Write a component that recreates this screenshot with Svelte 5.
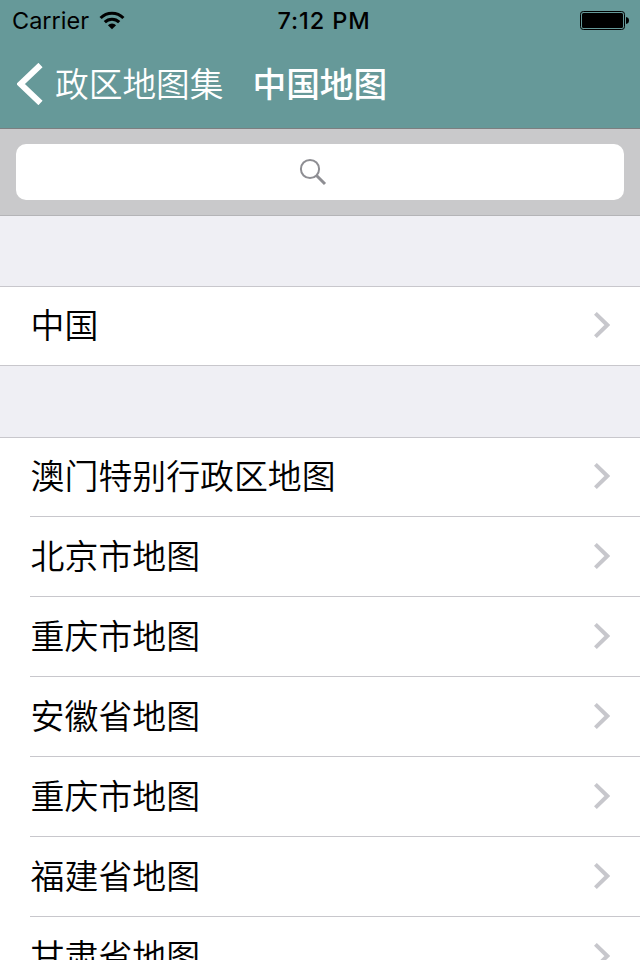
<script>
  const groups = [
    ['中国'],
    [
      '澳门特别行政区地图',
      '北京市地图',
      '重庆市地图',
      '安徽省地图',
      '重庆市地图',
      '福建省地图',
      '甘肃省地图',
    ],
  ];
</script>

<main class="screen">
  <header class="header">
    <div class="status">
      <div class="side">
        <span class="carrier">Carrier</span>
        <svg class="wifi" width="26" height="20" viewBox="0 0 26 20">
          <g fill="none" stroke="#000" stroke-width="3.1">
            <path d="M1.6 8A16.1 16.1 0 0 1 24.4 8" />
            <path d="M5.8 12.2A10.2 10.2 0 0 1 20.2 12.2" />
          </g>
          <path d="M8.9 15.2A5.8 5.8 0 0 1 17.1 15.2L13 19.3Z" />
        </svg>
      </div>
      <span class="time">7:12 PM</span>
      <div class="side right">
        <svg width="49" height="19" viewBox="0 0 49 19">
          <rect x=".5" y=".5" width="44" height="18" rx="2.8" fill="none" stroke="#000" />
          <rect x="2" y="2" width="41" height="15" rx="1.5" />
          <path d="M46 6C48 6.3 49 7.5 49 9.5S48 12.7 46 13Z" />
        </svg>
      </div>
    </div>
    <nav class="nav">
      <button class="back">
        <svg width="26" height="42" viewBox="0 0 26 42">
          <path d="M23.5 2L3.5 21L23.5 40" fill="none" stroke="#fff" stroke-width="6" />
        </svg>
        <span>政区地图集</span>
      </button>
      <h1>中国地图</h1>
    </nav>
  </header>

  <div class="search">
    <div class="field">
      <svg width="28" height="28" viewBox="0 0 28 28" fill="none" stroke="#8e8e93">
        <circle cx="11" cy="11" r="9.1" stroke-width="2" />
        <path d="M17.5 17.5L26 26" stroke-width="3" />
      </svg>
    </div>
  </div>

  {#each groups as rows}
    <ul class="group">
      {#each rows as label}
        <li class="row">
          <div class="content">
            <span class="label">{label}</span>
            <svg width="16" height="26" viewBox="0 0 16 26">
              <path d="M1.4 1.4L13.3 13L1.4 24.6" fill="none" stroke="#c7c7cc" stroke-width="4" />
            </svg>
          </div>
        </li>
      {/each}
    </ul>
  {/each}
</main>

<style>
  .screen {
    width: 640px;
    height: 960px;
    overflow: hidden;
    background: #efeff4;
    color: #000;
    font-family: 'Noto Sans CJK SC', sans-serif;
  }
  .header {
    height: 128px;
    background: #669999;
    border-bottom: 1px solid #7b7f81;
  }
  .status {
    display: flex;
    align-items: center;
    height: 40px;
    padding: 0 11px 0 12px;
    font: 24px/40px Inter, sans-serif;
  }
  .side {
    flex: 1;
    display: flex;
    align-items: center;
  }
  .right {
    justify-content: flex-end;
  }
  .carrier {
    width: 78px;
    margin-right: 9px;
    padding-top: 2px;
    white-space: nowrap;
    font-size: 23.5px;
    line-height: 38px;
  }
  .time {
    padding: 2px 0 0 7px;
    font-weight: 550;
    font-size: 23.5px;
    line-height: 38px;
    letter-spacing: 0.9px;
  }
  .nav {
    display: flex;
    align-items: center;
    height: 88px;
    padding-left: 17px;
    color: #fff;
  }
  .back {
    display: flex;
    align-items: center;
    gap: 12px;
    padding: 0;
    border: 0;
    background: none;
    color: inherit;
    font: 350 33.7px/50px 'Noto Sans CJK SC', sans-serif;
  }
  .back span {
    padding-bottom: 2px;
  }
  h1 {
    margin: 0 0 0 29px;
    padding-bottom: 2px;
    font-size: 33.7px;
    line-height: 50px;
    font-weight: 500;
  }
  .search {
    box-sizing: border-box;
    height: 87px;
    padding: 15px 16px;
    background: #c9c9cb;
    border-bottom: 1px solid #b4b4b7;
  }
  .field {
    display: flex;
    align-items: center;
    justify-content: center;
    height: 56px;
    padding-right: 14px;
    box-sizing: border-box;
    border-radius: 10px;
    background: #fff;
  }
  .group {
    margin: 70px 0 0;
    padding: 0;
    list-style: none;
    background: #fff;
    border-top: 1px solid #c8c7cc;
    border-bottom: 1px solid #c8c7cc;
  }
  .group + .group {
    margin-top: 71px;
  }
  .row {
    padding-left: 30px;
  }
  .content {
    box-sizing: border-box;
    display: flex;
    align-items: center;
    justify-content: space-between;
    height: 80px;
    padding: 0 30px 2px 0;
    border-bottom: 1px solid #c8c7cc;
    font-size: 33.9px;
    font-weight: 350;
    line-height: 50px;
  }
  .label {
    padding: 0 0 2px 0.6px;
  }
  .row:first-child .content {
    height: 79px;
  }
  .row:last-child .content {
    border-bottom-color: transparent;
  }
  .row:only-child .content {
    height: 78px;
    border-bottom: 0;
  }
</style>
